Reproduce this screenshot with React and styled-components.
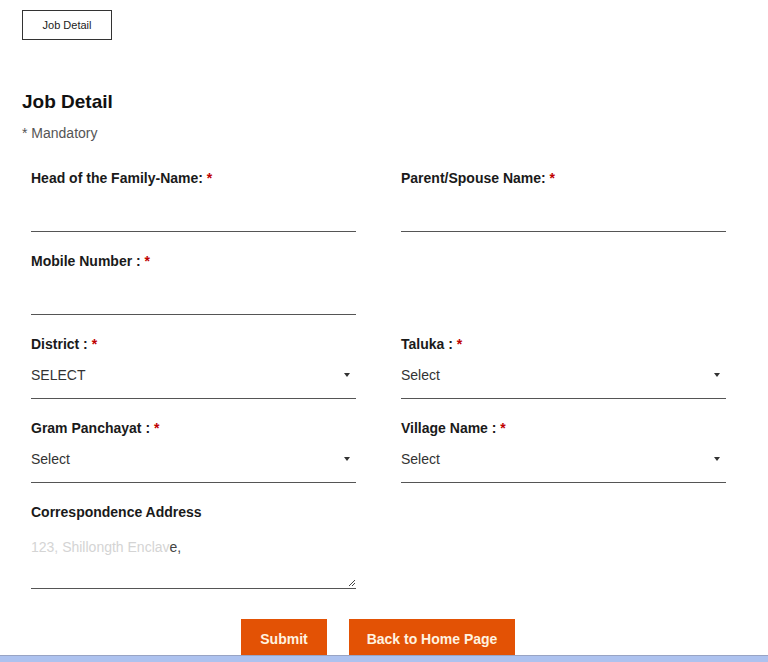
import React from "react";
import styled, { createGlobalStyle } from "styled-components";

const GlobalStyle = createGlobalStyle`
  body {
    margin: 0;
    background: #fff;
    font-family: "Liberation Sans", Arial, sans-serif;
    color: #1a1a1a;
  }
`;

const Page = styled.div`
  padding: 10px 22px 0 22px;
`;

const TabButton = styled.div`
  width: 88px;
  height: 28px;
  border: 1px solid #333;
  display: flex;
  align-items: center;
  justify-content: center;
  font-size: 11px;
  color: #222;
`;

const Heading = styled.h2`
  margin: 51px 0 0 0;
  font-size: 19px;
  font-weight: bold;
  line-height: 22px;
  color: #111;
`;

const Mandatory = styled.div`
  margin-top: 11px;
  font-size: 14px;
  color: #555;
  line-height: 18px;
`;

const Form = styled.div`
  padding: 26px 21px 0 9px;
  display: grid;
  grid-template-columns: 325px 325px;
  column-gap: 45px;
  row-gap: 19px;
`;

const Field = styled.div`
  display: flex;
  flex-direction: column;
`;

const Label = styled.label`
  font-size: 14px;
  font-weight: bold;
  line-height: 20px;
  color: #1a1a1a;
`;

const Star = styled.span`
  color: #c00000;
`;

const TextInput = styled.div`
  height: 43px;
  border-bottom: 1px solid #555;
`;

const SelectBox = styled.div`
  height: 44px;
  border-bottom: 1px solid #555;
  display: flex;
  align-items: center;
  justify-content: space-between;
  font-size: 14px;
  color: #333;
  padding-right: 6px;
  padding-bottom: 2px;
  box-sizing: border-box;
  height: 45px;
`;

const Caret = styled.span`
  width: 0;
  height: 0;
  border-left: 3px solid transparent;
  border-right: 3px solid transparent;
  border-top: 4px solid #333;
`;

const TextArea = styled.div`
  position: relative;
  height: 67px;
  border-bottom: 1px solid #555;
  padding-top: 17px;
  box-sizing: border-box;
  font-size: 14px;
  color: #d4d4d4;
`;

const Grip = styled.svg`
  position: absolute;
  right: 0;
  bottom: 1px;
`;

const Actions = styled.div`
  display: flex;
  justify-content: center;
  gap: 22px;
  padding: 30px 21px 0 9px;
`;

const Button = styled.button`
  height: 40px;
  width: ${({ $w }) => $w}px;
  border: none;
  background: #e35205;
  color: #fff3e0;
  font-family: "Liberation Sans", Arial, sans-serif;
  font-size: 14px;
  font-weight: bold;
  padding: 0;
`;

const TaskBar = styled.div`
  position: fixed;
  left: 0;
  right: 0;
  bottom: 0;
  height: 6px;
  background: #adc2ef;
  border-top: 1px solid #98a4c4;
`;

const Req = () => <Star>*</Star>;

const App = () => {
  return (
    <>
      <GlobalStyle />
      <Page>
        <TabButton>Job Detail</TabButton>
        <Heading>Job Detail</Heading>
        <Mandatory>* Mandatory</Mandatory>
        <Form>
          <Field>
            <Label>Head of the Family-Name: <Req /></Label>
            <TextInput />
          </Field>
          <Field>
            <Label>Parent/Spouse Name: <Req /></Label>
            <TextInput />
          </Field>
          <Field>
            <Label>Mobile Number : <Req /></Label>
            <TextInput />
          </Field>
          <div />
          <Field>
            <Label>District : <Req /></Label>
            <SelectBox>SELECT<Caret /></SelectBox>
          </Field>
          <Field>
            <Label>Taluka : <Req /></Label>
            <SelectBox>Select<Caret /></SelectBox>
          </Field>
          <Field>
            <Label>Gram Panchayat : <Req /></Label>
            <SelectBox>Select<Caret /></SelectBox>
          </Field>
          <Field>
            <Label>Village Name : <Req /></Label>
            <SelectBox>Select<Caret /></SelectBox>
          </Field>
          <Field>
            <Label>Correspondence Address</Label>
            <TextArea>
              123, Shillongth Enclav<span style={{ color: "#444" }}>e,</span>
              <Grip width="9" height="9" viewBox="0 0 9 9">
                <path d="M8 2 L2 8 M8 5 L5 8" stroke="#444" strokeWidth="1" />
              </Grip>
            </TextArea>
          </Field>
        </Form>
        <Actions>
          <Button $w={86}>Submit</Button>
          <Button $w={166}>Back to Home Page</Button>
        </Actions>
      </Page>
      <TaskBar />
    </>
  );
};

export default App;
